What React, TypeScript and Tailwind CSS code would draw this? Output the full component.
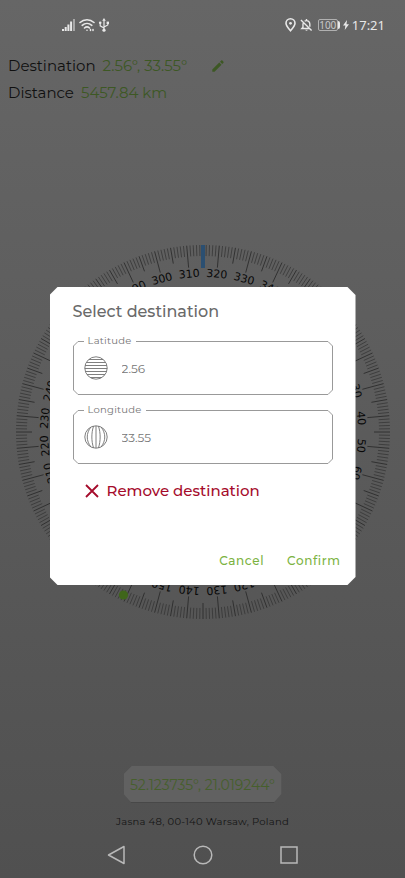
import React from "react";

const sans = "font-['Montserrat','Inter',sans-serif]";

function polar(radius: number, degrees: number) {
  const a = (degrees * Math.PI) / 180;
  return [190 + radius * Math.sin(a), 190 - radius * Math.cos(a)];
}

function Dial() {
  const heading = 315;
  const ticks = Array.from({ length: 360 }, (_, i) => i);
  return (
    <svg viewBox="0 0 380 380" className="w-[380px] shrink-0" role="img" aria-label="Compass">
      {ticks.map((d) => {
        const inner = d % 10 === 0 ? 165 : d % 5 === 0 ? 171 : 176;
        const [x1, y1] = polar(187, d - heading);
        const [x2, y2] = polar(inner, d - heading);
        return (
          <line key={d} x1={x1} y1={y1} x2={x2} y2={y2} stroke={d % 5 === 0 ? "#262626" : "#303030"} strokeWidth={d % 5 === 0 ? 0.8 : 0.7} />
        );
      })}
      {ticks.filter((d) => d % 10 === 0).map((d) => (
        <text key={d} x="190" y="35" textAnchor="middle" fontSize="11" fill="#080808" className="font-['DejaVu_Sans',sans-serif]" transform={`rotate(${d - heading} 190 190)`}>
          {d}
        </text>
      ))}
      <rect x="188" y="3" width="4" height="23" fill="#2b4f71" />
      <circle cx="110.5" cy="353" r="4.6" fill="#3f661a" />
    </svg>
  );
}

function StatusBar() {
  return (
    <header className="flex h-[50px] items-center justify-between pr-5 pl-[62px] text-[#e8e8e8]">
      <div className="flex items-center gap-[3px]">
        <svg width="14" height="14" viewBox="0 0 14 14" fill="currentColor" aria-label="Signal">
          <path d="M0 11h2v2H0zM2.7 9h2v4h-2zM5.4 6.500h2V13h-2zM8.100 3.500h2V13h-2z" />
          <path d="M11 1h2v12h-2z" opacity=".5" />
        </svg>
        <svg width="16" height="14" viewBox="0 0 16 14" fill="none" stroke="currentColor" strokeWidth="1.6" strokeLinecap="round" aria-label="Wi-Fi">
          <path d="M1 4.500c4-3.700 10-3.700 14 0M3.200 7.300c2.800-2.500 6.800-2.500 9.600 0M5.500 10c1.500-1.300 3.500-1.300 5 0" />
          <circle cx="8" cy="12.300" r=".8" fill="currentColor" stroke="none" />
          <path d="M11.500 11.500v1M14 11.500v1" strokeWidth="1.500" />
        </svg>
        <svg width="12" height="14" viewBox="0 0 12 14" fill="none" stroke="currentColor" strokeWidth="1.2" aria-label="USB">
          <path d="M6 2v10M6 10 2.2 7.8V5M6 9l3.8-2V4.5" />
          <path d="m6 0 1.8 2.8H4.2z" fill="currentColor" stroke="none" />
          <circle cx="2.2" cy="4.8" r="1.3" fill="currentColor" stroke="none" />
          <path d="M8.6 3.6h2.4V6H8.6z" fill="currentColor" stroke="none" />
          <circle cx="6" cy="12.2" r="1.6" fill="currentColor" stroke="none" />
        </svg>
      </div>
      <div className="flex items-center">
        <svg width="11" height="14" viewBox="0 0 11 14" fill="none" stroke="currentColor" strokeWidth="1.600" aria-label="Location">
          <path d="M5.500 12.800C3 10 1 7.700 1 5.300a4.500 4.500 0 0 1 9 0c0 2.400-2 4.700-4.500 7.500z" />
          <circle cx="5.500" cy="5.300" r="1.400" fill="currentColor" stroke="none" />
        </svg>
        <svg className="ml-1" width="13" height="14" viewBox="0 0 14 14" fill="none" stroke="currentColor" strokeWidth="1.500" aria-label="Muted">
          <path d="m1 1.500 11.500 11.500M3.200 5v4.500L2 10.800h8.300M5 2.800c3-1.500 5.600.5 5.600 3v3M7 .5v1.400" />
          <path d="M5.600 12h2.800c-.5 1.500-2.300 1.500-2.800 0z" fill="currentColor" stroke="none" />
        </svg>
        <span className="ml-[5px] flex h-3 w-5 items-center justify-center rounded-xs border border-[#b0b0b0] font-['Noto_Sans',sans-serif] text-[10px] leading-none text-[#c8c8c8]">100</span>
        <span className="h-2 w-0.5 rounded-r-xs bg-current" />
        <svg className="ml-[3px]" width="6" height="10" viewBox="0 0 6 10" fill="currentColor" aria-label="Charging">
          <path d="M4 0 0 5.600h2.400L1.700 10 6 4.200H3.500z" />
        </svg>
        <time className="ml-[3px] font-['Noto_Sans',sans-serif] text-[13px] leading-5">17:21</time>
      </div>
    </header>
  );
}

function GlobeIcon({ vertical = false }: { vertical?: boolean }) {
  return (
    <svg width="24" height="24" viewBox="0 0 24 24" fill="none" stroke="#707070" strokeWidth="0.9" aria-hidden="true">
      <circle cx="12" cy="12" r="11.200" />
      {vertical ? (
        <path d="M12 1v22M9.500 1.200c-2.200 7-2.200 14.600 0 21.600M14.500 1.200c2.200 7 2.200 14.600 0 21.600M7 2c-5 6-5 14 0 20M17 2c5 6 5 14 0 20" />
      ) : (
        <path d="M5 3.500h14M2.500 6.500h19M1.200 9.500h21.600M.8 12.500h22.400M1.500 15.500h21M3 18.500h18M6.500 21.500h11" />
      )}
    </svg>
  );
}

function Field({ id, label, value, vertical }: { id: string; label: string; value: string; vertical?: boolean }) {
  return (
    <div className="relative h-[54px]">
      <svg className="absolute inset-0 h-full w-full overflow-visible" fill="none" stroke="#999" aria-hidden="true">
        <path d="M255 .5H5L.5 5v44L5 53.500H255L259.500 49V5z" />
      </svg>
      <label htmlFor={id} className="absolute -top-2 left-[11px] bg-white px-1 text-[10px] leading-4 tracking-wide text-[#757575]">{label}</label>
      <div className="flex h-full items-center gap-3.5 pl-[11px]">
        <GlobeIcon vertical={vertical} />
        <input id={id} defaultValue={value} className="min-w-0 flex-1 bg-transparent pt-0.5 text-xs text-[#757575] outline-none" />
      </div>
    </div>
  );
}

function DestinationDialog() {
  return (
    <section role="dialog" aria-label="Select destination" className="mx-auto flex h-[298px] w-[306px] flex-col bg-white px-[23px] pt-[11px] [clip-path:polygon(8px_0,calc(100%-8px)_0,100%_8px,100%_calc(100%-8px),calc(100%-8px)_100%,8px_100%,0_calc(100%-8px),0_8px)]">
      <h1 className="text-base leading-7 font-medium text-[#6a6a6a]">Select destination</h1>
      <div className="mt-[15px] flex flex-col gap-[15px]">
        <Field id="latitude" label="Latitude" value="2.56" />
        <Field id="longitude" label="Longitude" value="33.55" vertical />
      </div>
      <button className="mt-[15px] flex items-center gap-2 self-start pl-3 text-[15px] leading-6 font-medium text-[#a50b2b]">
        <svg width="14" height="14" viewBox="0 0 14 14" stroke="currentColor" strokeWidth="1.800" aria-hidden="true"><path d="m1 1 12 12M13 1 1 13" /></svg>
        Remove destination
      </button>
      <div className="-mr-2 mt-auto mb-3 flex justify-end gap-[23px] text-xs leading-6 font-medium tracking-wider text-[#7cb342]">
        <button>Cancel</button>
        <button>Confirm</button>
      </div>
    </section>
  );
}

export default function App() {
  return (
    <div className={`relative flex min-h-screen flex-col overflow-hidden bg-linear-to-b from-[#666] to-[#505050] ${sans}`}>
      <StatusBar />
      <div className="flex flex-col gap-[3px] px-2 pt-1 text-[15px] leading-6 text-[#101010]">
        <div className="flex items-center gap-[7px]">
          <span>Destination</span>
          <span className="text-[#3d5824]">2.56°, 33.55°</span>
          <button aria-label="Edit destination" className="ml-[18px] text-[#3d5824]">
            <svg width="12" height="12" viewBox="0 0 12 12" fill="currentColor"><path d="M.3 9.500 7.300 2.500l2.200 2.200L2.500 11.700H.3zM8 1.800 9.100.7c.5-.5 1-.5 1.400 0l.8.800c.5.5.5 1 0 1.400L10.200 4z" /></svg>
          </button>
        </div>
        <div className="flex gap-[7px]"><span>Distance</span><span className="text-[#3d5824]">5457.84 km</span></div>
      </div>
      <main className="mt-[137px] flex justify-center"><Dial /></main>
      <footer className="mt-auto flex flex-col items-center">
        <div className="bg-[#484848] pb-px [clip-path:polygon(8px_0,calc(100%-8px)_0,100%_8px,100%_calc(100%-9px),calc(100%-8px)_100%,8px_100%,0_calc(100%-9px),0_8px)]">
          <output className="flex h-9 w-[158px] items-center justify-center bg-[#616161] pt-0.5 text-sm text-[#465f2c]">52.123735°, 21.019244°</output>
        </div>
        <p className="mt-[11px] mb-0.5 text-[10px] leading-4 tracking-wide text-[#151515]">Jasna 48, 00-140 Warsaw, Poland</p>
        <nav className="flex h-[46px] w-full items-center justify-center gap-[67px] text-[#b8b8b8]" aria-label="System">
          <button aria-label="Back"><svg width="19" height="20" viewBox="0 0 19 20" fill="none" stroke="currentColor" strokeWidth="1.500" strokeLinejoin="round"><path d="M17 1.500v17L1.500 10z" /></svg></button>
          <button aria-label="Home"><svg width="20" height="20" viewBox="0 0 20 20" fill="none" stroke="currentColor" strokeWidth="1.500"><circle cx="10" cy="10" r="8.800" /></svg></button>
          <button aria-label="Recents"><svg width="18" height="18" viewBox="0 0 18 18" fill="none" stroke="currentColor" strokeWidth="1.500"><path d="M1 1h16v16H1z" /></svg></button>
        </nav>
      </footer>
      <div className="absolute inset-0 flex items-center pb-1.5">
        <DestinationDialog />
      </div>
    </div>
  );
}
